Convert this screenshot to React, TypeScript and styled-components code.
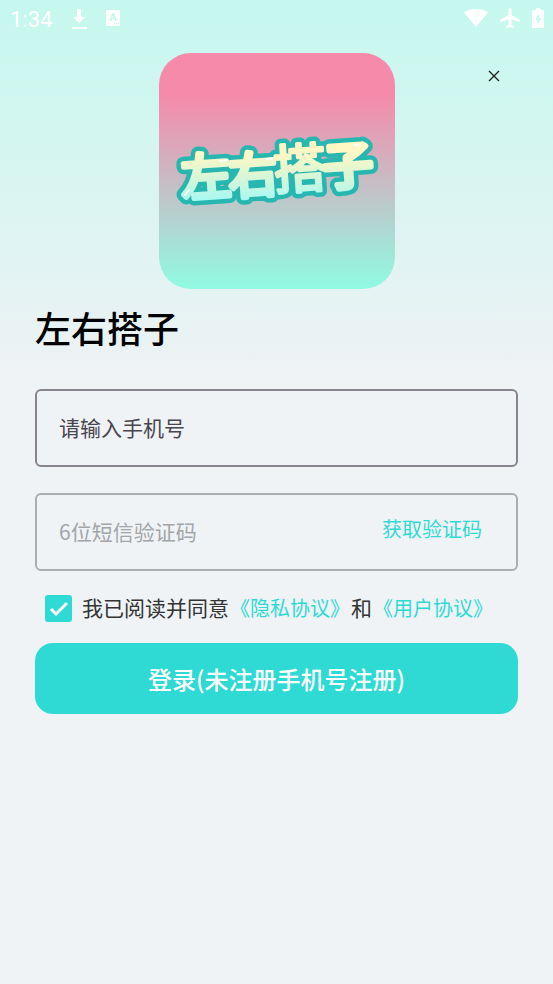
import React, { useState } from 'react';
import styled, { createGlobalStyle } from 'styled-components';

const accent = '#2fdad5';

const GlobalStyle = createGlobalStyle`
  *, *::before, *::after { box-sizing: border-box; }
  html { background: #eff3f6; }
  body { margin: 0; }
  button, input { font: inherit; }
`;

const Page = styled.div`
  min-height: 100vh;
  font-family: "Noto Sans CJK SC", sans-serif;
  color: #333333;
  background: linear-gradient(180deg, #c5f8ee 0, #ecf2f4 360px, #eff3f6 362px);
`;

const StatusBar = styled.header`
  display: flex;
  align-items: center;
  justify-content: space-between;
  height: 36px;
  padding: 0 9px 0 10px;
  color: #ffffff;
`;

const StatusGroup = styled.div<{ $gap: number }>`
  display: flex;
  align-items: center;
  gap: ${({ $gap }) => $gap}px;

  svg { display: block; }
`;

const Clock = styled.time`
  padding-top: 4px;
  font-family: Roboto, sans-serif;
  font-size: 22px;
  line-height: 34px;
`;

const Content = styled.main`
  padding: 17px 35px 0;
`;

const Hero = styled.div`
  display: grid;
  grid-template-columns: 1fr auto 1fr;
  align-items: start;
`;

const LogoTile = styled.div`
  grid-column: 2;
  width: 236px;
  height: 236px;
  border-radius: 32px;
  overflow: hidden;
  background: linear-gradient(180deg, #f58aab 18%, #92f8e1 98%);

  svg { display: block; }
`;

const CloseButton = styled.button`
  display: grid;
  place-items: center;
  justify-self: end;
  width: 24px;
  height: 24px;
  margin: 11px 12px 0 0;
  padding: 0;
  border: 0;
  background: none;
  color: #222222;
  cursor: pointer;
`;

const Title = styled.h1`
  margin: 11px 0 35px;
  font-size: 36px;
  line-height: 54px;
  font-weight: 500;
  color: #000000;
`;

const Form = styled.form`
  display: flex;
  flex-direction: column;
`;

const Field = styled.div<{ $muted?: boolean }>`
  display: flex;
  align-items: center;
  height: 78px;
  margin-bottom: 26px;
  padding: 0 34px 0 22px;
  border: 2px solid ${({ $muted }) => ($muted ? '#abadb0' : '#88838c')};
  border-radius: 6px;
`;

const TextInput = styled.input<{ $muted?: boolean }>`
  flex: 1;
  min-width: 0;
  height: 100%;
  padding: 0 0 3px;
  border: 0;
  outline: 0;
  background: none;
  font-size: 21px;
  color: #49454f;

  &::placeholder {
    color: ${({ $muted }) => ($muted ? '#a3a5a8' : '#49454f')};
    opacity: 1;
  }
`;

const CodeButton = styled.button`
  padding: 0 0 6px;
  border: 0;
  background: none;
  font-size: 20px;
  line-height: 30px;
  color: ${accent};
  cursor: pointer;
`;

const Agreement = styled.div`
  display: flex;
  align-items: center;
  height: 30px;
  margin: -4px 0 20px 10px;
  font-size: 21px;
  line-height: 30px;
  white-space: nowrap;
`;

const AgreementText = styled.div`
  display: flex;
  align-items: baseline;
  padding-bottom: 2px;
`;

const CheckControl = styled.span`
  display: grid;
  flex: none;
  width: 27px;
  height: 27px;
  margin-right: 10px;

  > * { grid-area: 1 / 1; }
  svg { pointer-events: none; }
`;

const Checkbox = styled.input`
  appearance: none;
  width: 27px;
  height: 27px;
  margin: 0;
  border: 2px solid ${accent};
  border-radius: 3px;
  cursor: pointer;

  &:checked { background: ${accent}; }
`;

const PolicyLink = styled.a`
  margin: 0 1px;
  font-size: 20px;
  color: ${accent};
  text-decoration: none;
`;

const SubmitButton = styled.button`
  height: 71px;
  padding: 0;
  border: 0;
  border-radius: 18px;
  background: ${accent};
  color: #ffffff;
  font-size: 24px;
  line-height: 36px;
  font-weight: 500;
  cursor: pointer;
`;

const DownloadIcon = () => (
  <svg width="16" height="22" viewBox="0 0 16 22" fill="currentColor" aria-hidden="true">
    <path d="M6 2h4v8h4l-6 6-6-6h4zM1 20h15v2H1z" />
  </svg>
);

const KeyboardIcon = () => (
  <svg width="14" height="18" viewBox="0 0 14 18" aria-hidden="true">
    <rect x="0" y="1" width="14" height="16" rx="1" fill="currentColor" />
    <text x="7" y="12" textAnchor="middle" fontFamily="Roboto, sans-serif" fontSize="11" fontWeight="700" fill="#c5f8ee">A</text>
    <path d="M8 14h1v1H8zM10 14h1v1h-1zM12 14h1v1h-1z" fill="#c5f8ee" />
  </svg>
);

const WifiIcon = () => (
  <svg width="24" height="20" viewBox="0 0 24 20" fill="currentColor" aria-hidden="true">
    <path d="M12 19 0 4.600C3.400 2 7.500 1 12 1s8.600 1 12 3.600z" />
  </svg>
);

const PlaneIcon = () => (
  <svg width="20" height="20" viewBox="2 2 20 20" fill="currentColor" aria-hidden="true">
    <path d="M22 16v-2l-8.500-5V3.500c0-.83-.67-1.500-1.500-1.500s-1.500.67-1.500 1.500V9L2 14v2l8.500-2.500V19L8 20.500V22l4-1 4 1v-1.500L13.500 19v-5.500L22 16z" />
  </svg>
);

const BatteryIcon = () => (
  <svg width="12" height="20" viewBox="0 0 12 20" aria-hidden="true">
    <path d="M4 0h4v2h3q1 0 1 1v16q0 1-1 1H1q-1 0-1-1V3q0-1 1-1h3z" fill="currentColor" />
    <path d="M7 5 3 12h2.500v5L9.500 10H7z" fill="#c5f8ee" />
  </svg>
);

const CloseIcon = () => (
  <svg width="12" height="12" viewBox="0 0 12 12" fill="none" stroke="currentColor" strokeWidth="1.4" aria-hidden="true">
    <path d="m1 1 10 10M11 1 1 11" />
  </svg>
);

const CheckIcon = () => (
  <svg width="27" height="27" viewBox="0 0 27 27" fill="none" stroke="#ffffff" strokeWidth="3" aria-hidden="true">
    <path d="m6 14 5 5L22 8" />
  </svg>
);

const logoLetters = [
  { char: '左', x: 47, y: 142, size: 50, bulge: 5 },
  { char: '右', x: 94, y: 140, size: 49, bulge: 5 },
  { char: '搭', x: 141, y: 135, size: 53, bulge: 3 },
  { char: '子', x: 189, y: 131, size: 50, bulge: 6 },
];

const Lettering = ({ paint, outline }: { paint: string; outline: number }) => (
  <g fill={paint} stroke={paint}>
    {logoLetters.map(({ char, x, y, size, bulge }) => (
      <text
        key={char}
        x={x}
        y={y}
        fontSize={size}
        strokeWidth={bulge + outline}
        transform={`rotate(-4 ${x} ${y - 18})`}
      >
        {char}
      </text>
    ))}
  </g>
);

const Logo = () => (
  <svg width="236" height="236" viewBox="0 0 236 236" role="img" aria-label="左右搭子">
    <defs>
      <linearGradient id="lettering" gradientUnits="userSpaceOnUse" x1="0" y1="88" x2="0" y2="150">
        <stop offset="0.2" stopColor="#fff8c4" />
        <stop offset="0.6" stopColor="#d5f6d8" />
        <stop offset="1" stopColor="#a2f9f6" />
      </linearGradient>
    </defs>
    <g
      fontFamily='"Noto Sans CJK SC", sans-serif'
      fontWeight="400"
      textAnchor="middle"
      strokeLinejoin="round"
    >
      <Lettering paint="#27b7b0" outline={9} />
      <Lettering paint="url(#lettering)" outline={0} />
    </g>
    <g fill="none" stroke="#ffffff" strokeWidth="2" strokeLinecap="round" opacity="0.85">
      <path d="M61 108l7-1M107 106l7-1M195 92l6 0M26 142l4-5" />
    </g>
  </svg>
);

export default function App() {
  const [agreed, setAgreed] = useState(true);

  return (
    <>
      <GlobalStyle />
      <Page>
        <StatusBar>
          <StatusGroup $gap={19}>
            <Clock>1:34</Clock>
            <DownloadIcon />
            <KeyboardIcon />
          </StatusGroup>
          <StatusGroup $gap={12}>
            <WifiIcon />
            <PlaneIcon />
            <BatteryIcon />
          </StatusGroup>
        </StatusBar>
        <Content>
          <Hero>
            <LogoTile><Logo /></LogoTile>
            <CloseButton type="button" aria-label="关闭"><CloseIcon /></CloseButton>
          </Hero>
          <Title>左右搭子</Title>
          <Form onSubmit={(event) => event.preventDefault()}>
            <Field>
              <TextInput type="tel" aria-label="手机号" placeholder="请输入手机号" />
            </Field>
            <Field $muted>
              <TextInput $muted inputMode="numeric" aria-label="短信验证码" placeholder="6位短信验证码" />
              <CodeButton type="button">获取验证码</CodeButton>
            </Field>
            <Agreement>
              <CheckControl>
                <Checkbox
                  id="agree"
                  type="checkbox"
                  checked={agreed}
                  onChange={(event) => setAgreed(event.target.checked)}
                />
                {agreed && <CheckIcon />}
              </CheckControl>
              <AgreementText>
                <label htmlFor="agree">我已阅读并同意</label>
                <PolicyLink href="#privacy">《隐私协议》</PolicyLink>
                <span>和</span>
                <PolicyLink href="#terms">《用户协议》</PolicyLink>
              </AgreementText>
            </Agreement>
            <SubmitButton type="submit">登录(未注册手机号注册)</SubmitButton>
          </Form>
        </Content>
      </Page>
    </>
  );
}
